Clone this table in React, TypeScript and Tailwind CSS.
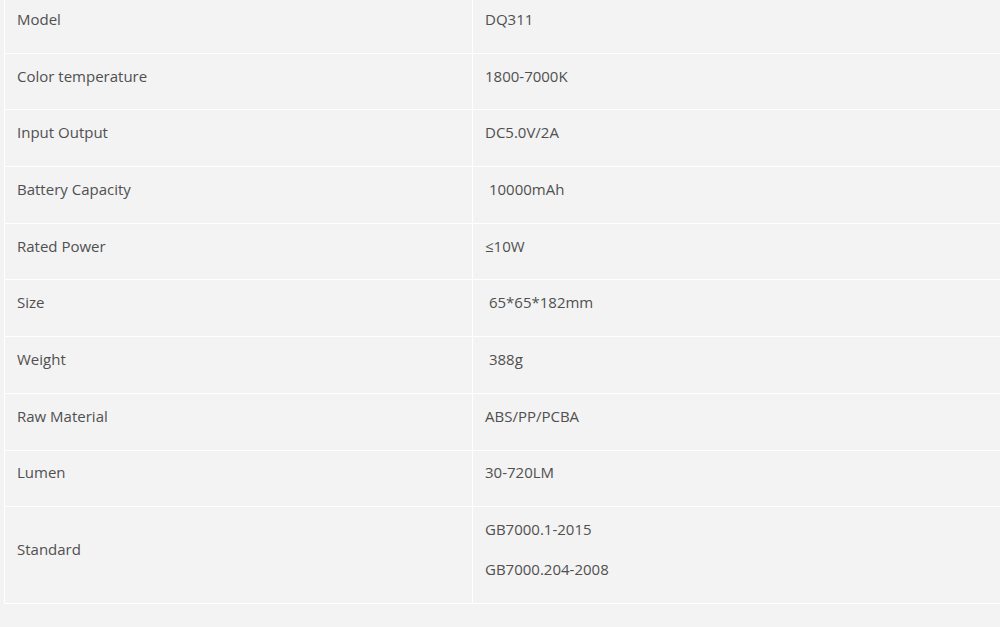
const specs: { label: string; values: string[] }[] = [
  { label: "Model", values: ["DQ311"] },
  { label: "Color temperature", values: ["1800-7000K"] },
  { label: "Input Output", values: ["DC5.0V/2A"] },
  { label: "Battery Capacity", values: ["\u00a010000mAh"] },
  { label: "Rated Power", values: ["≤10W"] },
  { label: "Size", values: ["\u00a065*65*182mm"] },
  { label: "Weight", values: ["\u00a0388g"] },
  { label: "Raw Material", values: ["ABS/PP/PCBA"] },
  { label: "Lumen", values: ["30-720LM"] },
  { label: "Standard", values: ["GB7000.1-2015", "GB7000.204-2008"] },
];

export default function App() {
  return (
    <div className="w-[1000px] h-[627px] overflow-hidden bg-[#f3f3f3] font-['Open_Sans','Liberation_Sans',sans-serif] text-[15px] text-[#505050]">
      <table className="-mt-[4px] ml-[4px] w-[1100px] border-collapse">
        <tbody>
          {specs.map((row) => (
            <tr key={row.label}>
              <td className="w-[468px] border border-white px-3 py-[7.85px] align-middle">
                <p className="mb-3 leading-[28px]">{row.label}</p>
              </td>
              <td className="border border-white px-3 py-[7.85px] align-middle">
                {row.values.map((v) => (
                  <p key={v} className="mb-3 leading-[28px]">
                    {v}
                  </p>
                ))}
              </td>
            </tr>
          ))}
        </tbody>
      </table>
    </div>
  );
}
